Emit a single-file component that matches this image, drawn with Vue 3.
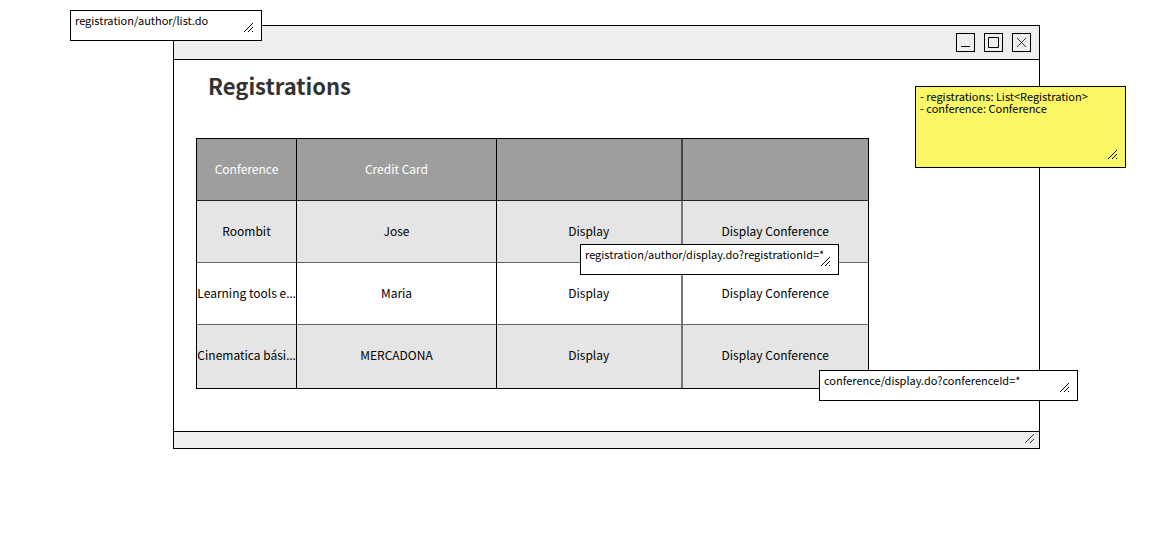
<script setup>
const columns = ['Conference', 'Credit Card', '', '']
const rows = [
  { title: 'Roombit', cut: false, card: 'Jose' },
  { title: 'Learning tools e', cut: true, card: 'Maria' },
  { title: 'Cinematica bási', cut: true, card: 'MERCADONA' },
]
const notes = [
  { name: 'page', text: 'registration/author/list.do' },
  { name: 'model', text: '- registrations: List<Registration>\n- conference: Conference' },
  { name: 'display', text: 'registration/author/display.do?registrationId=*' },
  { name: 'conference', text: 'conference/display.do?conferenceId=*' },
]
</script>

<template>
  <main class="canvas">
    <section class="window">
      <header class="titlebar">
        <button type="button" aria-label="Minimize">
          <svg viewBox="0 0 17 17"><path d="M4 12.5h9" /></svg>
        </button>
        <button type="button" aria-label="Maximize">
          <svg viewBox="0 0 17 17"><path d="M3.5 3.5h10v10h-10z" /></svg>
        </button>
        <button type="button" aria-label="Close">
          <svg viewBox="0 0 17 17"><path class="thin" d="M4 4l9 9M13 4l-9 9" /></svg>
        </button>
      </header>

      <div class="content">
        <h1>Registrations</h1>
        <table>
          <colgroup>
            <col class="narrow" />
            <col class="wide" />
            <col />
            <col />
          </colgroup>
          <thead>
            <tr>
              <th v-for="(column, i) in columns" :key="i" scope="col">{{ column }}</th>
            </tr>
          </thead>
          <tbody>
            <tr v-for="row in rows" :key="row.title">
              <td>{{ row.title }}<span v-if="row.cut" class="more">…</span></td>
              <td>{{ row.card }}</td>
              <td>Display</td>
              <td>Display Conference</td>
            </tr>
          </tbody>
        </table>
      </div>

      <footer class="statusbar">
        <svg class="grip" viewBox="0 0 9 9"><path d="M0 9L9 0M5 9L9 5" /></svg>
      </footer>
    </section>

    <aside v-for="note in notes" :key="note.name" class="note" :class="note.name">
      <p>{{ note.text }}</p>
      <svg class="grip" viewBox="0 0 9 9"><path d="M0 9L9 0M4 9L9 4M8 9L9 8" /></svg>
    </aside>
  </main>
</template>

<style>
body {
  background: #fff;
}
</style>

<style scoped>
.canvas {
  position: relative;
  padding: 25px 136px 24px 173px;
  font-family: "Noto Sans CJK SC", "Noto Sans CJK JP", sans-serif;
  color: #000;
}

.window {
  border: 1px solid #000;
  background: #fff;
}

.titlebar {
  display: flex;
  justify-content: flex-end;
  gap: 9px;
  padding: 7px 8px;
  border-bottom: 1px solid #000;
  background: #eee;
}

.titlebar button {
  width: 19px;
  height: 19px;
  padding: 0;
  border: 1px solid #000;
  background: #eee;
}

svg {
  display: block;
  fill: none;
  stroke: #000;
  stroke-width: 1;
}

svg .thin {
  stroke-width: 0.8;
}

.content {
  padding: 7px 170px 42px 22px;
}

h1 {
  margin: 0 0 35px 12px;
  font-size: 22px;
  line-height: 36px;
  font-weight: 700;
  color: #333;
}

table {
  width: 100%;
  table-layout: fixed;
  border: 1px solid #000;
  border-spacing: 0;
  font-size: 12px;
  line-height: 20px;
}

.narrow {
  width: 100px;
}

.wide {
  width: 200px;
}

th,
td {
  height: 59px;
  padding: 0 0 2px;
  border-right: 1px solid #000;
  border-bottom: 1px solid #666;
  text-align: center;
  vertical-align: middle;
  font-weight: 400;
  white-space: nowrap;
}

th {
  border-bottom-color: #222;
  background: #9e9e9e;
  color: #fff;
}

th:nth-child(3) {
  border-right: 2px solid #444;
}

td:nth-child(3) {
  border-right: 2px solid #777;
}

th:last-child,
td:last-child {
  border-right: 0;
}

tbody tr:last-child td {
  padding-bottom: 4px;
  border-bottom: 0;
}

tbody tr:nth-child(odd) {
  background: #e5e5e5;
}

.more {
  font-family: "Noto Sans", sans-serif;
  line-height: 12px;
}

.statusbar {
  display: flex;
  justify-content: flex-end;
  height: 16px;
  padding-right: 5px;
  border-top: 1px solid #000;
  background: #eee;
}

.statusbar .grip {
  margin-top: 2px;
  stroke: #333;
}

.grip {
  width: 9px;
  height: 9px;
}

.note {
  position: absolute;
  box-sizing: border-box;
  min-height: 31px;
  padding: 3px 4px;
  border: 1px solid #000;
  background: #fff;
  font-size: 11px;
  line-height: 12px;
}

.note p {
  margin: 0;
  white-space: pre;
}

.note .grip {
  position: absolute;
  right: 8px;
  bottom: 8px;
}

.page {
  top: 10px;
  left: 70px;
  width: 192px;
}

.model {
  top: 86px;
  left: 915px;
  width: 211px;
  min-height: 82px;
  background: #fcf766;
}

.display {
  top: 244px;
  left: 580px;
  width: 259px;
}

.conference {
  top: 370px;
  left: 819px;
  width: 259px;
}
</style>
